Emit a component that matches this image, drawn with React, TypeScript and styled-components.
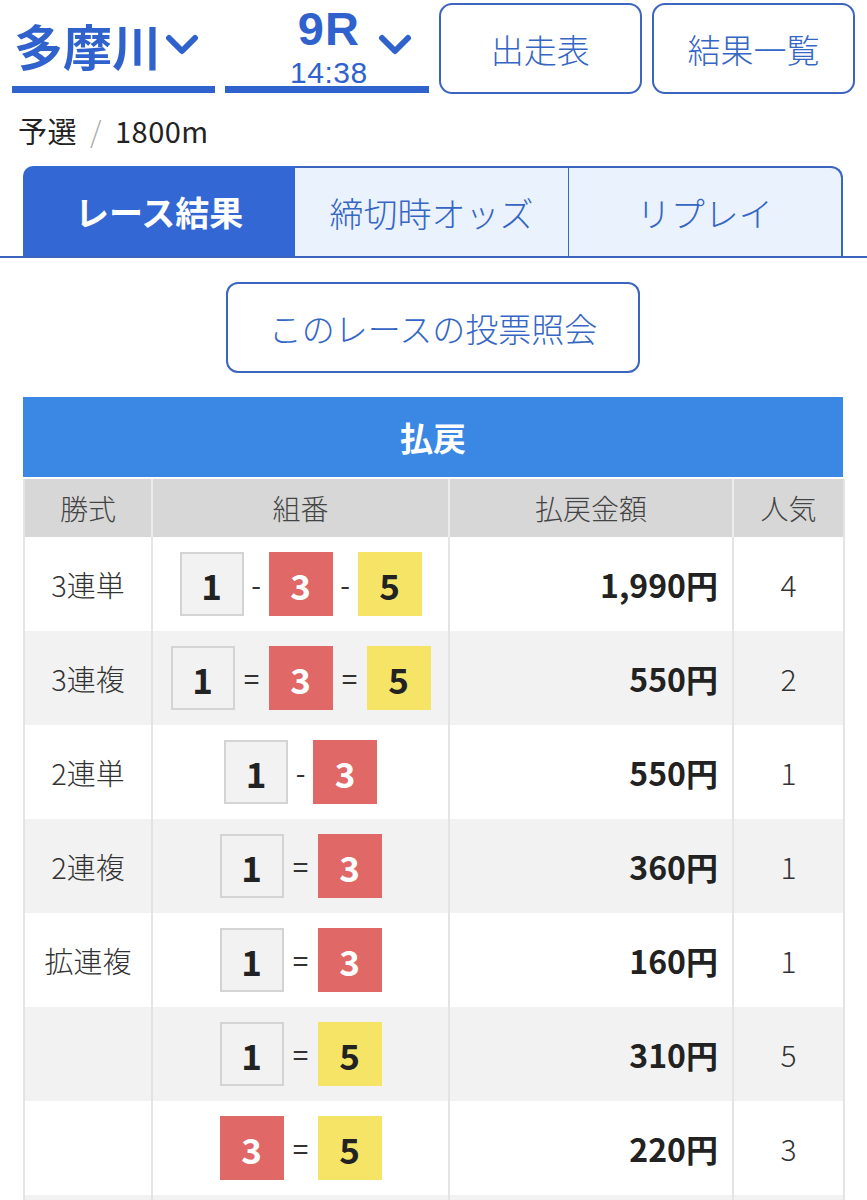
import React from 'react';
import styled, { createGlobalStyle } from 'styled-components';

type Frame = 1 | 3 | 5;

interface PayoutRow {
  kind: string;
  combo: Frame[];
  sep: '-' | '=';
  amount: string;
  rank: number;
}

const rows: PayoutRow[] = [
  { kind: '3連単', combo: [1, 3, 5], sep: '-', amount: '1,990円', rank: 4 },
  { kind: '3連複', combo: [1, 3, 5], sep: '=', amount: '550円', rank: 2 },
  { kind: '2連単', combo: [1, 3], sep: '-', amount: '550円', rank: 1 },
  { kind: '2連複', combo: [1, 3], sep: '=', amount: '360円', rank: 1 },
  { kind: '拡連複', combo: [1, 3], sep: '=', amount: '160円', rank: 1 },
  { kind: '', combo: [1, 5], sep: '=', amount: '310円', rank: 5 },
  { kind: '', combo: [3, 5], sep: '=', amount: '220円', rank: 3 },
  { kind: '', combo: [], sep: '=', amount: '', rank: 0 },
];

const GlobalStyle = createGlobalStyle`
  body {
    margin: 0;
    background: #ffffff;
    font-family: "Noto Sans CJK JP", "Noto Sans", sans-serif;
    color: #222222;
  }
`;

const Chevron: React.FC = () => (
  <svg width="34" height="24" viewBox="0 0 34 24">
    <polyline
      points="4,5 17,18 30,5"
      fill="none"
      stroke="#2f62cc"
      strokeWidth="6"
      strokeLinecap="round"
      strokeLinejoin="round"
    />
  </svg>
);

const App: React.FC = () => {
  return (
    <Page>
      <GlobalStyle />
      <Header>
        <VenueSelect>
          <VenueName>多摩川</VenueName>
          <Chevron />
        </VenueSelect>
        <RaceSelect>
          <span />
          <RaceStack>
            <RaceNo>9R</RaceNo>
            <RaceTime>14:38</RaceTime>
          </RaceStack>
          <ChevronSlot>
            <Chevron />
          </ChevronSlot>
        </RaceSelect>
        <OutlineButton>出走表</OutlineButton>
        <OutlineButton>結果一覧</OutlineButton>
      </Header>

      <SubTitle>
        予選<Slash>/</Slash>1800m
      </SubTitle>

      <TabBar>
        <Tab active first>レース結果</Tab>
        <Tab>締切時オッズ</Tab>
        <Tab last>リプレイ</Tab>
      </TabBar>

      <QueryRow>
        <QueryButton>このレースの投票照会</QueryButton>
      </QueryRow>

      <TableWrap>
        <TableTitle>払戻</TableTitle>
        <Table>
          <colgroup>
            <col style={{ width: 128 }} />
            <col style={{ width: 297 }} />
            <col style={{ width: 284 }} />
            <col style={{ width: 111 }} />
          </colgroup>
          <thead>
            <tr>
              <HeadCell>勝式</HeadCell>
              <HeadCell>組番</HeadCell>
              <HeadCell>払戻金額</HeadCell>
              <HeadCell>人気</HeadCell>
            </tr>
          </thead>
          <tbody>
            {rows.map((row, i) => (
              <BodyRow key={i} striped={i % 2 === 1}>
                <KindCell>{row.kind}</KindCell>
                <ComboCell>
                  <Combo>
                    {row.combo.map((n, j) => (
                      <React.Fragment key={j}>
                        {j > 0 && <Sep wide={row.sep === '='}>{row.sep}</Sep>}
                        <FrameBox frame={n}>{n}</FrameBox>
                      </React.Fragment>
                    ))}
                  </Combo>
                </ComboCell>
                <AmountCell>{row.amount}</AmountCell>
                <RankCell>{row.rank || ''}</RankCell>
              </BodyRow>
            ))}
          </tbody>
        </Table>
      </TableWrap>
    </Page>
  );
};

const blue = '#2f62cc';
const lineBlue = '#3b65bf';

const Page = styled.div`
  width: 867px;
  height: 1200px;
  overflow: hidden;
`;

const Header = styled.div`
  display: grid;
  grid-template-columns: repeat(4, 1fr);
  column-gap: 10px;
  padding: 3px 12px 0;
`;

const VenueSelect = styled.div`
  display: flex;
  align-items: center;
  height: 83px;
  border-bottom: 7px solid ${blue};
  padding-left: 2px;
  gap: 4px;
`;

const VenueName = styled.span`
  font-size: 49px;
  font-weight: 700;
  color: ${blue};
  line-height: 1;
`;

const RaceSelect = styled.div`
  display: grid;
  grid-template-columns: 1fr auto 1fr;
  align-items: center;
  height: 83px;
  border-bottom: 7px solid ${blue};
`;

const RaceStack = styled.div`
  display: flex;
  flex-direction: column;
  align-items: center;
  color: ${blue};
  padding-left: 4px;
  font-family: "Liberation Sans", Arial, sans-serif;
`;

const RaceNo = styled.span`
  font-size: 47px;
  font-weight: 700;
  line-height: 1.12;
  letter-spacing: 1px;
`;

const RaceTime = styled.span`
  font-size: 30px;
  font-weight: 400;
  line-height: 1.12;
  letter-spacing: 0.5px;
`;

const ChevronSlot = styled.div`
  display: flex;
  justify-content: flex-end;
  padding-right: 17px;
  padding-bottom: 2px;
`;

const OutlineButton = styled.div`
  display: flex;
  align-items: center;
  justify-content: center;
  height: 91px;
  box-sizing: border-box;
  border: 2px solid ${lineBlue};
  border-radius: 13px;
  font-size: 33px;
  font-weight: 300;
  color: #3566c4;
`;

const SubTitle = styled.div`
  padding: 16px 18px 0;
  height: 40px;
  font-size: 29px;
  font-weight: 400;
  line-height: 40px;
  color: #222222;
  letter-spacing: 0.5px;
`;

const Slash = styled.span`
  color: #aaaaaa;
  font-weight: 300;
  margin: 0 13px;
`;

const TabBar = styled.div`
  display: flex;
  margin-top: 16px;
  padding: 0 24px 0 23px;
  border-bottom: 2px solid ${lineBlue};
`;

const Tab = styled.div<{ active?: boolean; first?: boolean; last?: boolean }>`
  flex: 1;
  height: 90px;
  box-sizing: border-box;
  display: flex;
  align-items: center;
  justify-content: center;
  font-size: 34px;
  background: ${p => (p.active ? '#3367d3' : '#eaf2fd')};
  color: ${p => (p.active ? '#ffffff' : '#3566c4')};
  font-weight: ${p => (p.active ? 700 : 300)};
  border-top: ${p => (p.active ? 'none' : `2px solid ${lineBlue}`)};
  border-right: ${p => (p.last ? `2px solid ${lineBlue}` : p.active ? 'none' : `1px solid ${lineBlue}`)};
  border-radius: ${p => (p.first ? '10px 0 0 0' : p.last ? '0 12px 0 0' : '0')};
`;

const QueryRow = styled.div`
  display: flex;
  justify-content: center;
  padding: 24px 0 0;
  margin-left: -1px;
`;

const QueryButton = styled.div`
  width: 414px;
  height: 91px;
  box-sizing: border-box;
  display: flex;
  align-items: center;
  justify-content: center;
  border: 2px solid ${lineBlue};
  border-radius: 12px;
  font-size: 33px;
  font-weight: 300;
  color: #3566c4;
`;

const TableWrap = styled.div`
  margin: 24px 24px 0 23px;
`;

const TableTitle = styled.div`
  height: 80px;
  display: flex;
  align-items: center;
  justify-content: center;
  background: #3a88e4;
  color: #ffffff;
  font-size: 33px;
  font-weight: 700;
`;

const Table = styled.table`
  width: 100%;
  border-collapse: collapse;
  table-layout: fixed;
  border-left: 2px solid #e4e4e4;
  border-right: 2px solid #e4e4e4;
`;

const HeadCell = styled.th`
  height: 58px;
  padding: 0;
  background: #d7d7d7;
  color: #444444;
  font-size: 28px;
  font-weight: 300;
  text-align: center;
  border-top: 2px solid #ffffff;
  border-left: 2px solid #ececec;
  &:first-child {
    border-left: none;
  }
`;

const BodyRow = styled.tr<{ striped: boolean }>`
  height: 94px;
  background: ${p => (p.striped ? '#f2f2f2' : '#ffffff')};
`;

const BaseCell = styled.td`
  padding: 0;
  border-left: 2px solid #e4e4e4;
  &:first-child {
    border-left: none;
  }
`;

const KindCell = styled(BaseCell)`
  text-align: center;
  font-size: 29px;
  font-weight: 300;
  color: #333333;
`;

const ComboCell = styled(BaseCell)`
  text-align: center;
`;

const Combo = styled.div`
  display: flex;
  align-items: center;
  justify-content: center;
`;

const Sep = styled.span<{ wide: boolean }>`
  font-size: 28px;
  color: #333333;
  width: ${p => (p.wide ? '34px' : '25px')};
  text-align: center;
  line-height: 1;
`;

const frameColors: Record<Frame, { bg: string; fg: string; border: string }> = {
  1: { bg: '#f2f2f2', fg: '#222222', border: '#d4d4d4' },
  3: { bg: '#e06866', fg: '#ffffff', border: '#e06866' },
  5: { bg: '#f5e466', fg: '#222222', border: '#f5e466' },
};

const FrameBox = styled.span<{ frame: Frame }>`
  width: 64px;
  height: 64px;
  box-sizing: border-box;
  display: flex;
  align-items: center;
  justify-content: center;
  font-size: 35px;
  font-weight: 700;
  background: ${p => frameColors[p.frame].bg};
  color: ${p => frameColors[p.frame].fg};
  border: 2px solid ${p => frameColors[p.frame].border};
`;

const AmountCell = styled(BaseCell)`
  text-align: right;
  padding-right: 14px;
  font-size: 32px;
  font-weight: 700;
  color: #222222;
`;

const RankCell = styled(BaseCell)`
  text-align: center;
  font-size: 30px;
  font-weight: 300;
  color: #333333;
`;

export default App;
